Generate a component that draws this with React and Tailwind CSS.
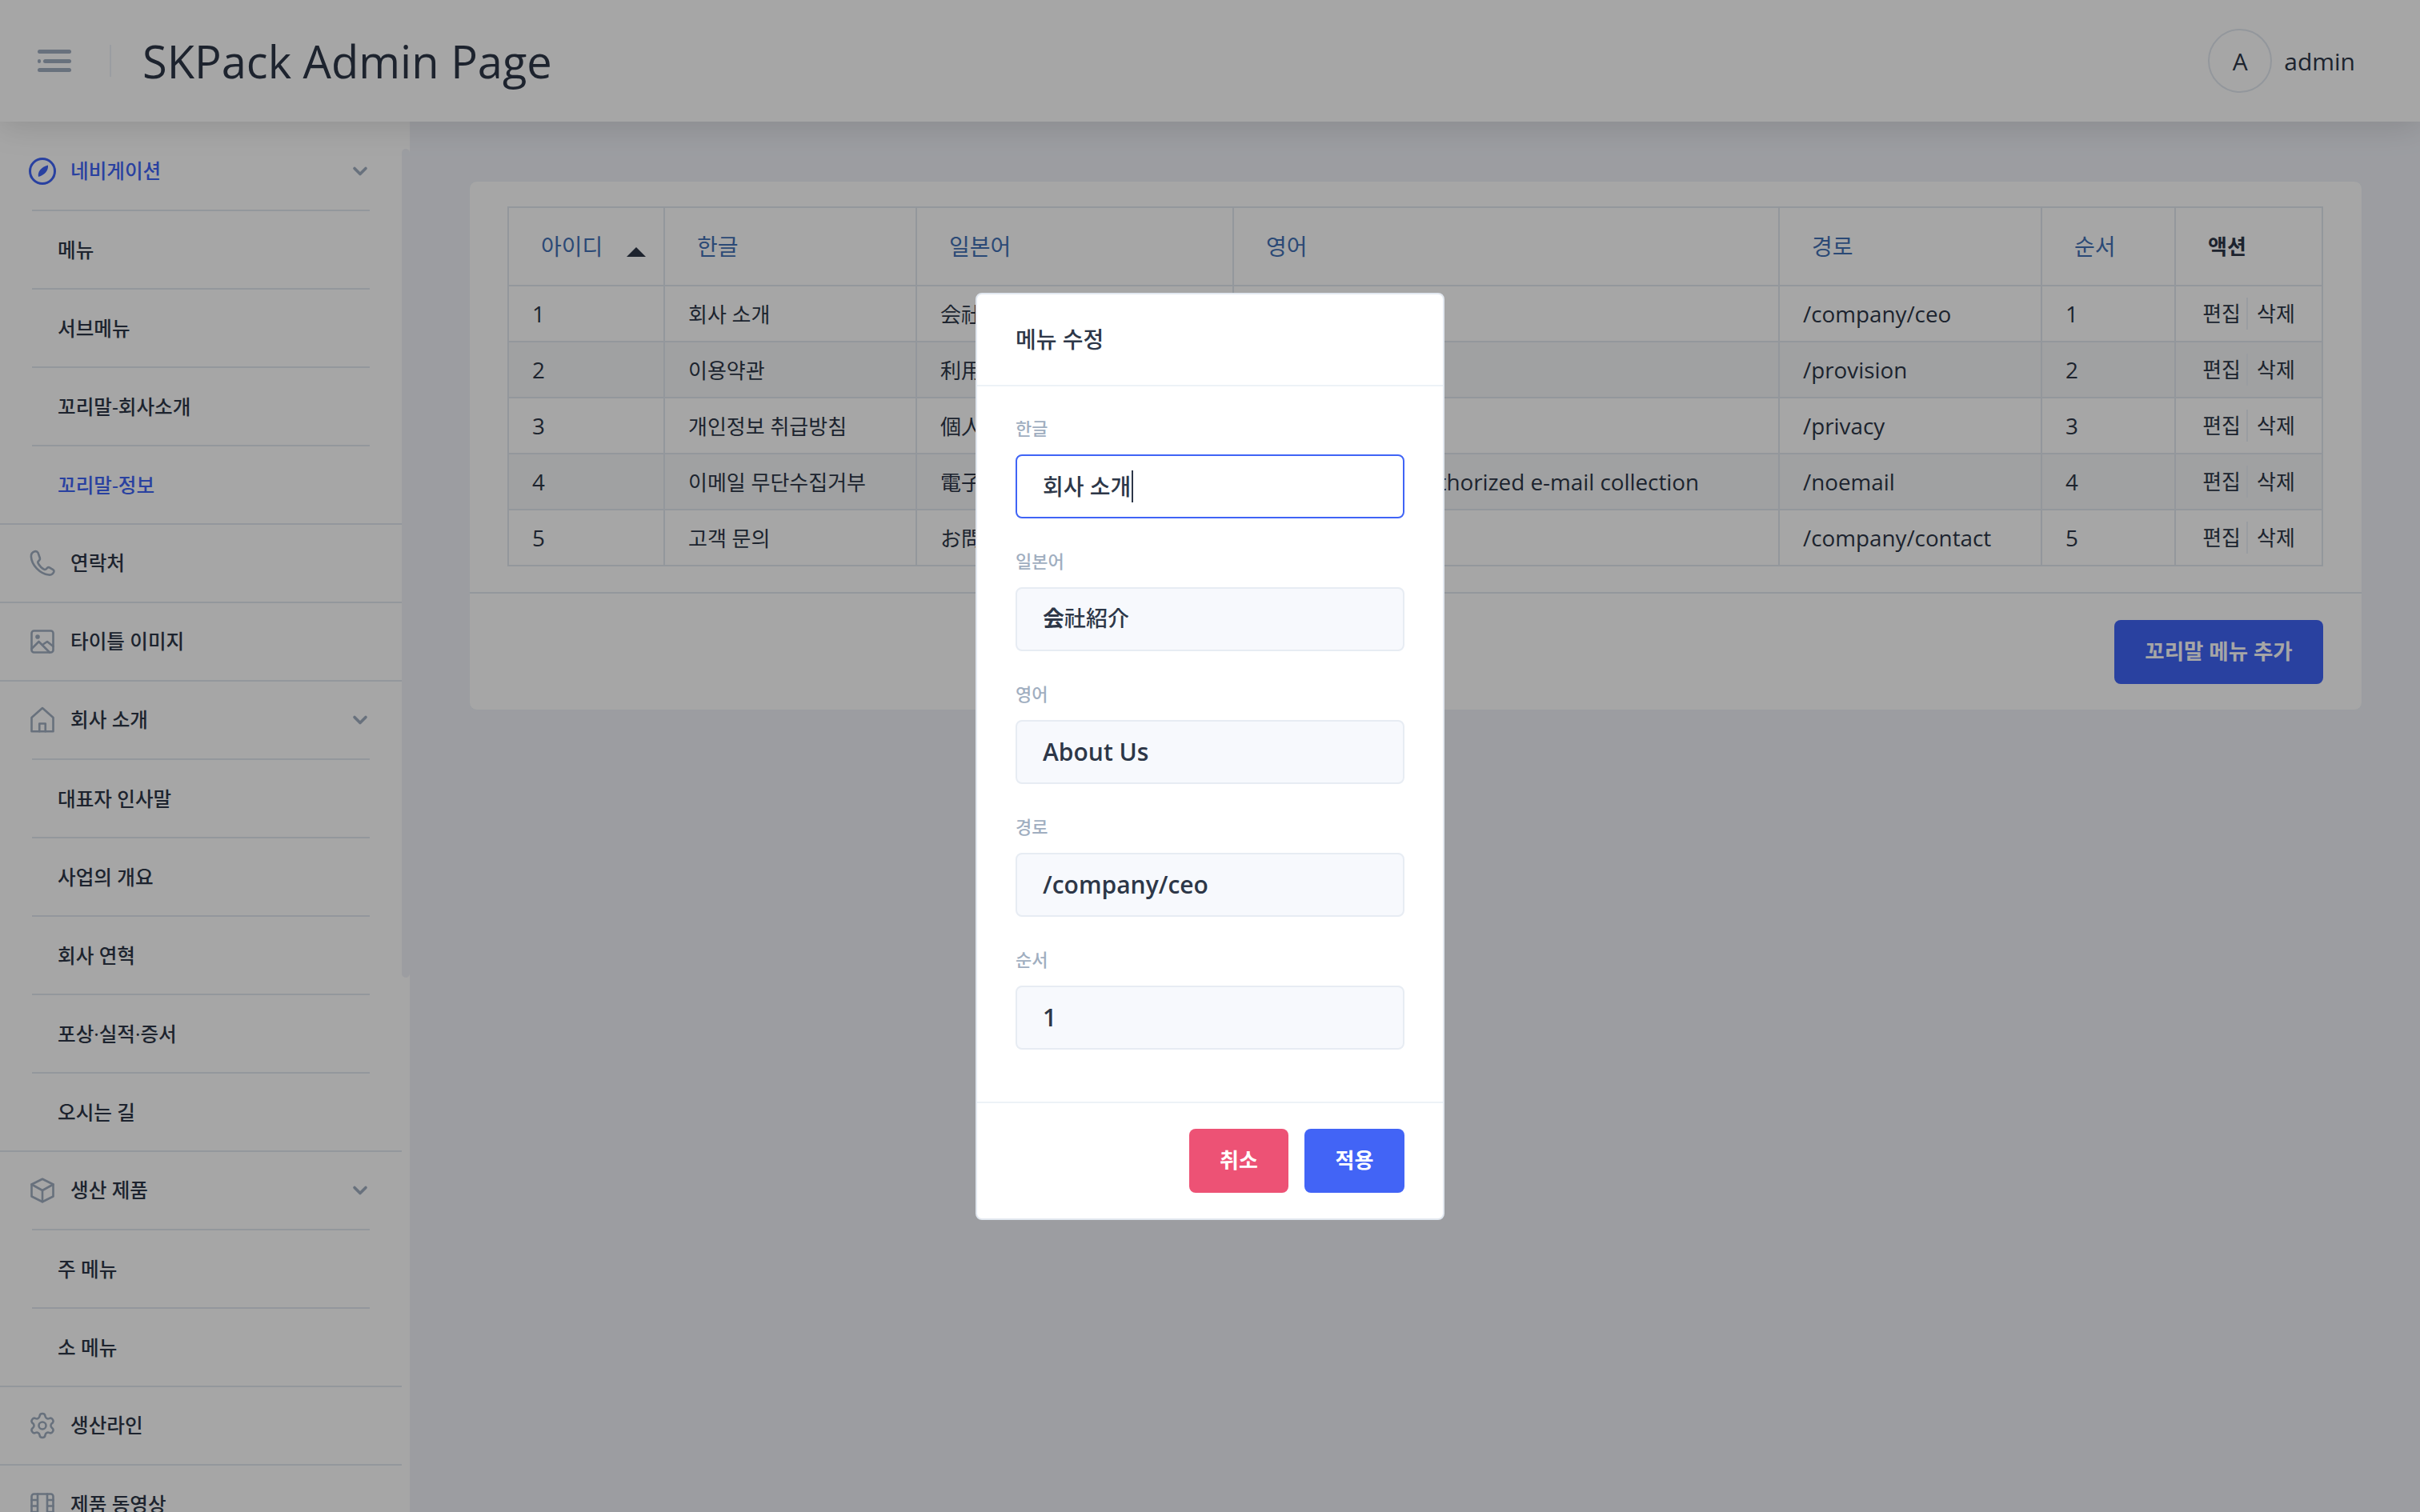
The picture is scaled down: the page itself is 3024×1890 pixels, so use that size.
import React from "react";
import { Settings } from "lucide-react";

const FONT = { fontFamily: '"Open Sans","Noto Sans CJK KR",sans-serif' };

const Chevron = () => (
  <svg width="20" height="20" viewBox="0 0 20 20" fill="none" stroke="#a0aec0" strokeWidth="3.6" strokeLinecap="round" strokeLinejoin="round">
    <path d="M3 6.500l7 7 7-7" />
  </svg>
);

const iconProps = { width: 40, height: 40, viewBox: "0 0 24 24", fill: "none", stroke: "#a0aec0", strokeWidth: 1.75, strokeLinecap: "round", strokeLinejoin: "round" };

const PhoneIcon = () => (
  <svg {...iconProps}>
    <path d="M5.600 2.200c-1.900.6-3.200 2.300-3 4.400.4 6.900 7.200 14.200 14.700 15.100 2 .2 3.700-.9 4.300-2.600.2-.7-.1-1.300-.7-1.700l-2.800-1.700c-.7-.4-1.400-.3-2 .2l-1.200 1.100c-.4.3-.9.4-1.300.2-2.400-1.200-4.100-3.100-5.300-5.500-.2-.4-.1-.9.2-1.200l1-1.100c.5-.6.6-1.300.3-2L8.400 3.400C7.800 2.300 6.700 1.900 5.600 2.200z" />
  </svg>
);
const ImageIcon = () => (
  <svg {...iconProps}>
    <rect x="3" y="3" width="18" height="18" rx="2" />
    <circle cx="8" cy="8" r="1" fill="#a0aec0" />
    <path d="M3 18l6-6 9 9M13 14l3-2 5 4" />
  </svg>
);
const HomeIcon = () => (
  <svg {...iconProps}>
    <path d="M3 21.500V10L12 2l9 8v11.500z" />
    <path d="M9.500 21.500V15h5v6.500" />
  </svg>
);
const BoxIcon = () => (
  <svg {...iconProps}>
    <path d="M12 2.500l9 4.500v10l-9 4.500L3 17V7z" />
    <path d="M3 7l9 5 9-5M12 12v9.500" />
  </svg>
);
const FilmIcon = () => (
  <svg {...iconProps}>
    <rect x="3" y="3" width="18" height="18" rx="2" />
    <path d="M8 3v18M16 3v18M3 8h5M3 13h5M3 18h5M16 8h5M16 13h5M16 18h5" />
  </svg>
);
const GearIcon = () => <Settings size={42} color="#a0aec0" strokeWidth={1.7} />;
const CompassIcon = () => (
  <svg width="36" height="36" viewBox="0 0 36 36" fill="none">
    <circle cx="18" cy="18" r="15.500" stroke="#4064f6" strokeWidth="3" />
    <path d="M25 10.500c.5 6.500-3.500 12-12 14.500-1.500-6 3.500-12.500 12-14.500z" fill="#4064f6" />
  </svg>
);

const Full = ({ icon, label, last }) => (
  <div className={`h-[98px] flex items-center pl-[35px] pr-[42px] ${last ? "" : "border-b-2 border-[#e2e8f0]"}`}>
    <span className="w-[36px] flex justify-center shrink-0">{icon}</span>
    <span className="ml-[17px] flex-1 text-[24.6px] font-medium text-[#2d3748]">{label}</span>
  </div>
);

const Group = ({ icon, label, active, items, current }) => (
  <div className="border-b-2 border-[#e2e8f0]">
    <div className="h-[96px] flex items-center pl-[35px] pr-[42px]">
      <span className="w-[36px] flex justify-center shrink-0">{icon}</span>
      <span className={`ml-[17px] flex-1 text-[24.6px] font-medium ${active ? "text-[#4064f6]" : "text-[#2d3748]"}`}>{label}</span>
      <Chevron />
    </div>
    <div className="mx-[40px]">
      {items.map((it) => (
        <div key={it} className={`h-[98px] flex items-center pl-[32px] pt-[2px] border-t-2 border-[#e2e8f0] text-[24.6px] font-medium ${it === current ? "text-[#4064f6]" : "text-[#2d3748]"}`}>
          {it}
        </div>
      ))}
    </div>
  </div>
);

const rows = [
  ["1", "회사 소개", "会社紹介", "About Us", "/company/ceo"],
  ["2", "이용약관", "利用規約", "Terms of Service", "/provision"],
  ["3", "개인정보 취급방침", "個人情報取扱方針", "Privacy Policy", "/privacy"],
  ["4", "이메일 무단수집거부", "電子メール無断収集拒否", "Rejection of unauthorized e-mail collection", "/noemail"],
  ["5", "고객 문의", "お問い合わせ", "Contact Us", "/company/contact"],
];

const Th = ({ children }) => (
  <th className="border-2 border-[#e2e8f0] pl-[40px] text-left text-[28px] font-normal text-[#4271b5]">{children}</th>
);
const Td = ({ children, latin }) => (
  <td className={`border-2 border-[#e2e8f0] pl-[29px] pt-[2px] text-[#2d3748] whitespace-nowrap overflow-hidden ${latin ? "text-[27.8px]" : "text-[26px]"}`}>{children}</td>
);

const Field = ({ label, children, focus, latin }) => (
  <div className="mb-[39px]">
    <div className="h-[30px] mb-[17px] flex items-center text-[22px] font-medium text-[#a0aec0]">{label}</div>
    <div className={`h-[80px] rounded-[8px] flex items-center pl-[32px] text-[#2d3748] border-2 ${latin ? "text-[30px] font-semibold" : "text-[28px] font-medium"} ${focus ? "bg-white border-[#4064f6]" : "bg-[#f7f9fd] border-[#e7ecf3]"}`}>
      {children}
    </div>
  </div>
);

export default function App() {
  return (
    <div style={FONT} className="relative w-[3024px] h-[1890px] overflow-hidden bg-[#f0f2f8] flex flex-col">
      <header className="relative z-10 h-[152px] shrink-0 bg-white flex items-center shadow-[0_4px_40px_rgba(0,0,0,0.14)]">
        <svg className="ml-[47px]" width="43" height="28" viewBox="0 0 43 28" fill="#a0aec0">
          <rect x="0" y="0" width="42" height="5" rx="2.500" />
          <rect x="0" y="12" width="4" height="5" rx="2" />
          <rect x="7" y="12" width="35" height="5" rx="2.500" />
          <rect x="0" y="23" width="42" height="5" rx="2.500" />
        </svg>
        <div className="ml-[47px] w-[2px] h-[40px] bg-[#edf2f7]" />
        <h1 className="ml-[39px] flex-1 text-[56px] leading-none font-normal text-[#2d3748]">SKPack Admin Page</h1>
        <div className="flex items-center mr-[81px]">
          <div className="w-[80px] h-[80px] rounded-full border-2 border-[#e2e8f0] flex items-center justify-center text-[30px] text-[#2d3748]">A</div>
          <span className="ml-[15px] text-[30px] text-[#2d3748]">admin</span>
        </div>
      </header>

      <div className="flex flex-1 min-h-0">
        <aside className="relative w-[512px] shrink-0 bg-white pr-[10px] pt-[14px] overflow-hidden">
          <div className="absolute right-0 top-[34px] w-[10px] h-[1036px] rounded-full bg-[#f0f2f8]" />
          <Group icon={<CompassIcon />} label="네비게이션" active items={["메뉴", "서브메뉴", "꼬리말-회사소개", "꼬리말-정보"]} current="꼬리말-정보" />
          <Full icon={<PhoneIcon />} label="연락처" />
          <Full icon={<ImageIcon />} label="타이틀 이미지" />
          <Group icon={<HomeIcon />} label="회사 소개" items={["대표자 인사말", "사업의 개요", "회사 연혁", "포상·실적·증서", "오시는 길"]} />
          <Group icon={<BoxIcon />} label="생산 제품" items={["주 메뉴", "소 메뉴"]} />
          <Full icon={<GearIcon />} label="생산라인" />
          <Full icon={<FilmIcon />} label="제품 동영상" last />
        </aside>

        <main className="flex-1 px-[74px] pt-[74px]">
          <section className="bg-white rounded-[10px] border border-[#edf2f7]">
            <div className="pl-[47px] pr-[48px] pt-[31px] pb-[32px]">
              <table className="w-[2267px] table-fixed border-collapse">
                <colgroup>
                  <col className="w-[195px]" />
                  <col className="w-[315px]" />
                  <col className="w-[396px]" />
                  <col className="w-[682px]" />
                  <col className="w-[328px]" />
                  <col className="w-[167px]" />
                  <col className="w-[184px]" />
                </colgroup>
                <thead>
                  <tr className="h-[98px]">
                    <Th>
                      <span className="inline-flex items-center">
                        아이디
                        <svg className="ml-[30px] mt-[14px]" width="24" height="12" viewBox="0 0 24 12" fill="#2d3748"><path d="M12 0l12 12H0z" /></svg>
                      </span>
                    </Th>
                    <Th>한글</Th>
                    <Th>일본어</Th>
                    <Th>영어</Th>
                    <Th>경로</Th>
                    <Th>순서</Th>
                    <th className="border-2 border-[#e2e8f0] pl-[40px] text-left text-[26px] font-bold text-[#2d3748]">액션</th>
                  </tr>
                </thead>
                <tbody>
                  {rows.map((r, i) => (
                    <tr key={r[0]} className={`h-[70px] ${i % 2 === 1 ? "bg-[#f6f7f9]" : ""}`}>
                      <Td latin>{r[0]}</Td>
                      <Td>{r[1]}</Td>
                      <Td>{r[2]}</Td>
                      <Td latin>{r[3]}</Td>
                      <Td latin>{r[4]}</Td>
                      <Td latin>{r[0]}</Td>
                      <td className="border-2 border-[#e2e8f0] text-[26px] text-[#2d3748]">
                        <div className="flex items-center justify-center h-[40px]">
                          <span className="pr-[7px] border-r-2 border-[#edf2f7] leading-[40px]">편집</span>
                          <span className="pl-[11px] leading-[40px]">삭제</span>
                        </div>
                      </td>
                    </tr>
                  ))}
                </tbody>
              </table>
            </div>
            <div className="border-t-2 border-[#e2e8f0] px-[48px] pt-[33px] pb-[32px] flex justify-end">
              <button className="w-[261px] h-[80px] rounded-[8px] bg-[#4064f6] text-white text-[26.5px] font-semibold">꼬리말 메뉴 추가</button>
            </div>
          </section>
        </main>
      </div>

      <div className="absolute inset-0 z-20 bg-black/35 flex items-center justify-center">
        <div className="w-[586px] bg-white rounded-[8px] border-2 border-[#e2e8f0]">
          <div className="h-[115px] flex items-center pl-[48px] text-[28px] font-medium text-[#2d3748] border-b-2 border-[#edf2f7]">메뉴 수정</div>
          <div className="px-[48px] pt-[38px] pb-[26px]">
            <Field label="한글" focus>
              <span>회사 소개</span>
              <span className="ml-[1px] w-[2px] h-[40px] bg-[#2d3748]" />
            </Field>
            <Field label="일본어"><span className="text-[27px]"><span className="font-bold">会</span>社紹介</span></Field>
            <Field label="영어" latin>About Us</Field>
            <Field label="경로" latin>/company/ceo</Field>
            <Field label="순서" latin>1</Field>
          </div>
          <div className="border-t-2 border-[#edf2f7] px-[48px] pt-[32px] pb-[32px] flex justify-end gap-[20px]">
            <button className="w-[124px] h-[80px] rounded-[8px] bg-[#ed5275] text-white text-[26px] font-semibold">취소</button>
            <button className="w-[125px] h-[80px] rounded-[8px] bg-[#4264f6] text-white text-[26px] font-semibold">적용</button>
          </div>
        </div>
      </div>
    </div>
  );
}
